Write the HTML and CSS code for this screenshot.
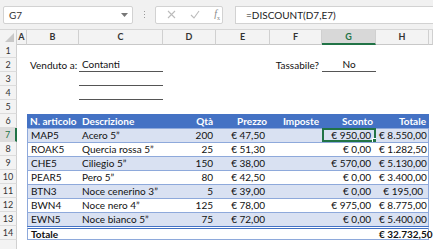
FILE: index.html
```html
<!DOCTYPE html>
<html lang="it">
<head>
<meta charset="utf-8">
<link rel="stylesheet" href="styles.css">
</head>
<body>
<div class="app">
  <div class="toolbar">
    <div class="namebox"><span>G7</span><svg class="caret" width="7" height="4" viewBox="0 0 7 4"><path d="M0 0h7L3.5 4z" fill="#777"/></svg></div>
    <div class="dots"><i></i><i></i><i></i></div>
    <div class="btns">
      <svg width="9" height="9" viewBox="0 0 9 9"><path d="M1 1l7 7M8 1L1 8" stroke="#bbb" stroke-width="1.1"/></svg>
      <svg width="10" height="9" viewBox="0 0 10 9"><path d="M1 5l3 3 5-7" stroke="#bbb" stroke-width="1.1" fill="none"/></svg>
      <span class="fx"><i>f</i><sub>x</sub></span>
    </div>
    <div class="formula">=DISCOUNT(D7,E7)</div>
  </div>
  <div class="sheet">
    <div class="row colhead">
      <div class="corner"><svg width="9" height="9" viewBox="0 0 9 9"><path d="M9 0v9H0z" fill="#c8c8c8"/></svg></div>
      <div class="ch">A</div><div class="ch">B</div><div class="ch">C</div><div class="ch">D</div><div class="ch">E</div><div class="ch">F</div><div class="ch sel">G</div><div class="ch">H</div><div class="ch"></div>
    </div>
    <div class="row"><div class="rh">1</div></div>
    <div class="row">
      <div class="rh">2</div><div></div><div class="c">Venduto a:</div><div class="c line">Contanti</div><div></div><div></div><div class="c r">Tassabile?</div><div class="c line ctr">No</div><div></div><div></div>
    </div>
    <div class="row"><div class="rh">3</div><div></div><div></div><div class="c line"></div></div>
    <div class="row"><div class="rh">4</div><div></div><div></div><div class="c line"></div></div>
    <div class="row"><div class="rh">5</div></div>
    <div class="row thead">
      <div class="rh">6</div><div></div><div class="c">N. articolo</div><div class="c">Descrizione</div><div class="c r">Qtà</div><div class="c r">Prezzo</div><div class="c r">Imposte</div><div class="c r">Sconto</div><div class="c r">Totale</div><div></div>
    </div>
    <div class="row band">
      <div class="rh sel">7</div><div></div><div class="c">MAP5</div><div class="c">Acero 5”</div><div class="c r">200</div><div class="c m">€ 47,50</div><div class="c"></div><div class="c m active">€ 950,00<span class="handle"></span></div><div class="c m">€ 8.550,00</div><div></div>
    </div>
    <div class="row plain">
      <div class="rh">8</div><div></div><div class="c">ROAK5</div><div class="c">Quercia rossa 5”</div><div class="c r">25</div><div class="c m">€ 51,30</div><div class="c"></div><div class="c m">€ 0,00</div><div class="c m">€ 1.282,50</div><div></div>
    </div>
    <div class="row band">
      <div class="rh">9</div><div></div><div class="c">CHE5</div><div class="c">Ciliegio 5”</div><div class="c r">150</div><div class="c m">€ 38,00</div><div class="c"></div><div class="c m">€ 570,00</div><div class="c m">€ 5.130,00</div><div></div>
    </div>
    <div class="row plain">
      <div class="rh">10</div><div></div><div class="c">PEAR5</div><div class="c">Pero 5”</div><div class="c r">80</div><div class="c m">€ 42,50</div><div class="c"></div><div class="c m">€ 0,00</div><div class="c m">€ 3.400,00</div><div></div>
    </div>
    <div class="row band">
      <div class="rh">11</div><div></div><div class="c">BTN3</div><div class="c">Noce cenerino 3”</div><div class="c r">5</div><div class="c m">€ 39,00</div><div class="c"></div><div class="c m">€ 0,00</div><div class="c m">€ 195,00</div><div></div>
    </div>
    <div class="row plain">
      <div class="rh">12</div><div></div><div class="c">BWN4</div><div class="c">Noce nero 4”</div><div class="c r">125</div><div class="c m">€ 78,00</div><div class="c"></div><div class="c m">€ 975,00</div><div class="c m">€ 8.775,00</div><div></div>
    </div>
    <div class="row band">
      <div class="rh">13</div><div></div><div class="c">EWN5</div><div class="c">Noce bianco 5”</div><div class="c r">75</div><div class="c m">€ 72,00</div><div class="c"></div><div class="c m">€ 0,00</div><div class="c m">€ 5.400,00</div><div></div>
    </div>
    <div class="row total">
      <div class="rh">14</div><div></div><div class="c">Totale</div><div class="c"></div><div class="c"></div><div class="c"></div><div class="c"></div><div class="c"></div><div class="c m">€ 32.732,50</div><div></div>
    </div>
    <div class="row"><div class="rh"></div></div>
  </div>
</div>
</body>
</html>
```
FILE: styles.css
```css
* { box-sizing: border-box; margin: 0; padding: 0; }
html, body { width: 433px; height: 249px; overflow: hidden; background: #fff; }
body { font-family: Lato, "Liberation Sans", sans-serif; font-size: 10px; color: #111; }

.toolbar {
  height: 30px;
  background: #f1f1f1;
  display: flex;
  align-items: center;
  padding-left: 3px;
  border-bottom: 1px solid #d6d6d6;
}
.namebox {
  width: 130px; height: 18px;
  background: #fff; border: 1px solid #d2d2d2; border-radius: 2px;
  display: flex; align-items: center; justify-content: space-between;
  padding: 0 4px 0 5px; color: #333; font-size: 10px;
}
.dots { width: 22px; display: flex; flex-direction: column; align-items: center; gap: 2px; }
.dots i { width: 1px; height: 1px; background: #999; display: block; }
.btns {
  width: 68px; height: 18px; background: #fff; border: 1px solid #d2d2d2; border-radius: 2px;
  display: flex; align-items: center; justify-content: space-between; padding: 0 2px 0 11px;
}
.fx { color: #888; font-family: "Liberation Serif", serif; font-size: 10px; }
.fx sub { font-size: 6px; }
.formula {
  flex: 1; height: 18px; margin-left: 12px; background: #fff; border: 1px solid #d2d2d2; border-right: 0;
  display: flex; align-items: center; padding-left: 10px; color: #222; font-size: 10px;
}

.sheet { display: flex; flex-direction: column; }
.row {
  display: grid;
  grid-template-columns: 17px 10px 52px 84px 53px 54px 52px 54px 53px 4px;
  height: 14px;
}
.rh {
  background: #f3f3f3; border-right: 1px solid #d0d0d0; border-bottom: 1px solid #dcdcdc;
  text-align: center; color: #333; font-size: 9px; line-height: 13px;
}
.rh.sel { background: #dcdcdc; color: #217346; border-right: 2px solid #217346; }
.colhead { height: 14px; }
.corner { background: #f3f3f3; border-right: 1px solid #d0d0d0; border-bottom: 1px solid #c8c8c8; display: flex; align-items: flex-end; justify-content: flex-end; padding: 0 2px 2px 0; }
.ch { background: #f3f3f3; border-right: 1px solid #d0d0d0; border-bottom: 1px solid #c8c8c8; text-align: center; color: #333; font-size: 9px; line-height: 13px; font-weight: bold; }
.ch.sel { background: #d8d8d8; color: #217346; border-bottom: 2px solid #217346; }

.c { padding: 0 3px; line-height: 14px; white-space: nowrap; overflow: visible; position: relative; }
.r { text-align: right; }
.m { text-align: right; padding-right: 5px; }
.ctr { text-align: center; }
.line { border-bottom: 1px solid #555; line-height: 13px; }

.thead .c { background: #4472c4; color: #fff; font-weight: bold; }
.band .c { background: #d9e1f2; border-top: 1px solid #8ea9db; line-height: 13px; }
.plain .c { background: #fff; border-top: 1px solid #8ea9db; line-height: 13px; }
.band .c:nth-child(3), .plain .c:nth-child(3), .total .c:nth-child(3) { border-left: 1px solid #8ea9db; }
.band .c:nth-child(9), .plain .c:nth-child(9), .total .c:nth-child(9) { border-right: 1px solid #8ea9db; }
.total .c { font-weight: bold; border-top: 3px double #4472c4; border-bottom: 1px solid #8ea9db; line-height: 10px; }

.active { outline: 2px solid #217346; outline-offset: -2px; }
.handle { position: absolute; right: -2px; bottom: -2px; width: 4px; height: 4px; background: #217346; border: 1px solid #fff; box-sizing: content-box; }
```
